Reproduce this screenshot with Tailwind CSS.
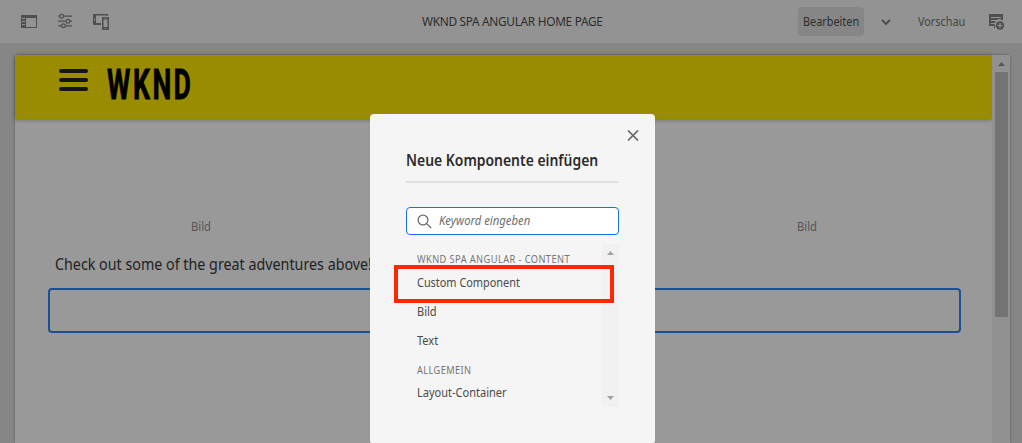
<!DOCTYPE html>
<html lang="de">
<head>
<meta charset="utf-8">
<title>WKND SPA Angular Home Page</title>
<script src="https://cdn.jsdelivr.net/npm/@tailwindcss/browser@4"></script>
</head>
<body class="relative h-[443px] w-[1022px] overflow-hidden bg-[#868686] font-['Noto_Sans',sans-serif] text-xs text-[#2d2d2d]">
<div class="flex h-[443px] flex-col">
  <header class="grid h-[43px] shrink-0 grid-cols-[1fr_180px_1fr] items-center bg-[#939393]">
    <div class="mb-px flex items-center gap-[18px] pl-5 text-[#4f4f4f]">
      <svg class="size-[18px]" viewBox="0 0 18 18"><path fill="currentColor" fill-rule="evenodd" d="M1 3h16v13H1zM6 6v9h10V6zM2 6v1h3V6zM2 9v1h3V9zM2 12v1h3V12z"/></svg>
      <svg class="size-[18px]" viewBox="0 0 18 18" fill="none" stroke="currentColor" stroke-width="1.200"><path d="M2 4.200h1.800M7.800 4.200H16M2 9.200h8M14 9.200h2M2 13.800h3.500M9.500 13.800H16"/><circle cx="5.800" cy="4.200" r="1.900"/><circle cx="12" cy="9.200" r="1.900"/><circle cx="7.500" cy="13.800" r="1.900"/></svg>
      <svg class="size-[18px]" viewBox="0 0 18 18"><path fill="currentColor" fill-rule="evenodd" d="M2 2h13.200q.8 0 .8.800V4h-1V3.500H4V11h5v2H2q-1 0-1-1V3q0-1 1-1zM2 6.500v2h1v-2zM10.800 5h5.400q.8 0 .8.800v11.400q0 .8-.8.800h-5.400q-.8 0-.8-.8V5.800q0-.8.8-.8zM11.500 7.500v7.500h4V7.500zM13 16v1h1v-1zM12.500 5.800v.7h2v-.7z"/></svg>
    </div>
    <h1 class="w-max origin-left translate-x-px scale-x-[0.986] whitespace-nowrap tracking-[-0.3px]">WKND SPA ANGULAR HOME PAGE</h1>
    <div class="flex items-center justify-end pr-[17px]">
      <span class="flex h-[29px] w-[66px] items-center rounded bg-[#868686] pl-[5px]"><span class="w-max origin-left scale-x-[0.905]">Bearbeiten</span></span>
      <svg class="ml-[16px] h-3 w-3" viewBox="0 0 12 12" fill="none" stroke="#4a4a4a" stroke-width="1.800"><path d="M2 4 6 8 10 4"/></svg>
      <span class="ml-[26px] w-[47px] whitespace-nowrap text-[#444]"><span class="inline-block origin-left scale-x-[0.905]">Vorschau</span></span>
      <svg class="mb-px ml-6 h-[18px] w-4" viewBox="0 0 16 18"><path fill="#4f4f4f" d="M0 2h14v6.500A5 5 0 0 0 6.500 15l-1.500 1.500V14H0z"/><path stroke="#939393" d="M2 5.500h10M2 8.500h7M2 11.500h4"/><circle cx="11" cy="13.500" r="4.200" fill="#4f4f4f"/><path stroke="#939393" stroke-width="1.200" d="M11 11v5M8.500 13.500h5"/></svg>
    </div>
  </header>
  <main class="ml-[15px] mt-3 flex w-[995px] flex-1 rounded-t-sm bg-[#999] shadow-[0_0_3px_rgba(0,0,0,0.35)]">
    <div class="flex w-[977px] flex-col">
      <div class="flex h-16 shrink-0 bg-[#998c00] pl-11 shadow-[0_1px_4px_rgba(0,0,0,0.3)]">
        <div class="mt-[14px] flex h-[22px] w-[29px] flex-col justify-between"><i class="h-1 rounded-full bg-[#151515]"></i><i class="h-1 rounded-full bg-[#151515]"></i><i class="h-1 rounded-full bg-[#151515]"></i></div>
        <svg class="ml-[18px] mt-3 h-8 w-[86px] overflow-visible" viewBox="0 0 86 32"><text transform="scale(0.62 1)" x="1.500 43.500 75 109" y="31.600" font-family="Roboto" font-size="43" font-weight="700" stroke="#000" stroke-width=".8">WKND</text></svg>
      </div>
      <div class="mt-[99px] flex h-[18px] shrink-0 justify-between pl-[176px] pr-[144px] leading-[18px] text-[#555]"><span class="w-max origin-left scale-x-[0.93]">Bild</span><span class="w-[51px]"><span class="inline-block origin-left scale-x-[0.93]">Bild</span></span></div>
      <p class="ml-10 mt-4 h-6 w-max shrink-0 origin-left scale-x-[0.893] whitespace-nowrap text-base leading-6 text-[#222]">Check out some of the great adventures above!</p>
      <div class="ml-[33px] mt-3 h-[45px] w-[913px] shrink-0 rounded border-2 border-[#1d5093]"></div>
    </div>
    <div class="flex w-[18px] flex-col items-center bg-[#919191]">
      <svg class="mt-[7px] h-1 w-[7px]" viewBox="0 0 7 4"><path d="M0 4 3.500 0 7 4z" fill="#555"/></svg>
      <div class="mt-[6px] h-[245px] w-[13px] bg-[#747474]"></div>
    </div>
  </main>
</div>

<section class="absolute left-[370px] top-[114px] flex h-[330px] w-[285px] flex-col rounded bg-[#f5f5f5] px-9 text-[#4b4b4b]">
  <svg class="absolute right-4 top-4 size-3" viewBox="0 0 12 12" stroke="#666" stroke-width="1.700"><path d="m1 .5 10 10M11 .5 1 10.500"/></svg>
  <h2 class="mt-[34px] h-6 w-max origin-left scale-x-[0.87] whitespace-nowrap text-base font-semibold leading-6 text-[#2c2c2c]">Neue Komponente einfügen</h2>
  <div class="mt-[9px] h-[2px] shrink-0 bg-[#e1e1e1]"></div>
  <div class="mt-6 flex h-7 shrink-0 items-center rounded border border-[#1473e6] bg-white pl-[10px] text-[#6e6e6e]">
    <svg class="size-[15px]" viewBox="0 0 15 15" fill="none" stroke="#6e6e6e" stroke-width="1.300"><circle cx="6" cy="6" r="4.900"/><path d="m9.600 9.600 4.600 4.400"/></svg>
    <span class="ml-[7px] origin-left scale-x-[0.94] whitespace-nowrap italic">Keyword eingeben</span>
  </div>
  <div class="mt-[9px] flex h-[163px] shrink-0">
    <div class="flex w-[196px] flex-col items-start whitespace-nowrap pl-[10.5px]">
      <h3 class="mt-[7px] h-4 origin-left scale-x-[0.925] text-[10px] leading-4 tracking-[0.45px] text-[#747474]">WKND SPA ANGULAR - CONTENT</h3>
      <p class="mt-px h-[29px] origin-left scale-x-[0.908] leading-[29px]">Custom Component</p>
      <p class="h-[29px] origin-left scale-x-[0.92] leading-[29px]">Bild</p>
      <p class="h-[29px] origin-left scale-x-[0.92] leading-[29px]">Text</p>
      <h3 class="mt-[7px] h-4 origin-left scale-x-[0.92] text-[10px] leading-4 tracking-[0.45px] text-[#747474]">ALLGEMEIN</h3>
      <p class="h-[29px] origin-left scale-x-[0.918] leading-[29px]">Layout-Container</p>
    </div>
    <div class="flex w-[17px] flex-col items-center justify-between bg-[#f1f1f1] py-[7px]">
      <svg class="h-1 w-[7px]" viewBox="0 0 7 4"><path d="M0 4 3.500 0 7 4z" fill="#a3a3a3"/></svg>
      <svg class="h-1 w-[7px]" viewBox="0 0 7 4"><path d="M0 0 3.500 4 7 0z" fill="#a3a3a3"/></svg>
    </div>
  </div>
  <div class="absolute left-6 top-[151px] h-[38px] w-[220px] border-4 border-[#ff2600]"></div>
</section>
</body>
</html>
